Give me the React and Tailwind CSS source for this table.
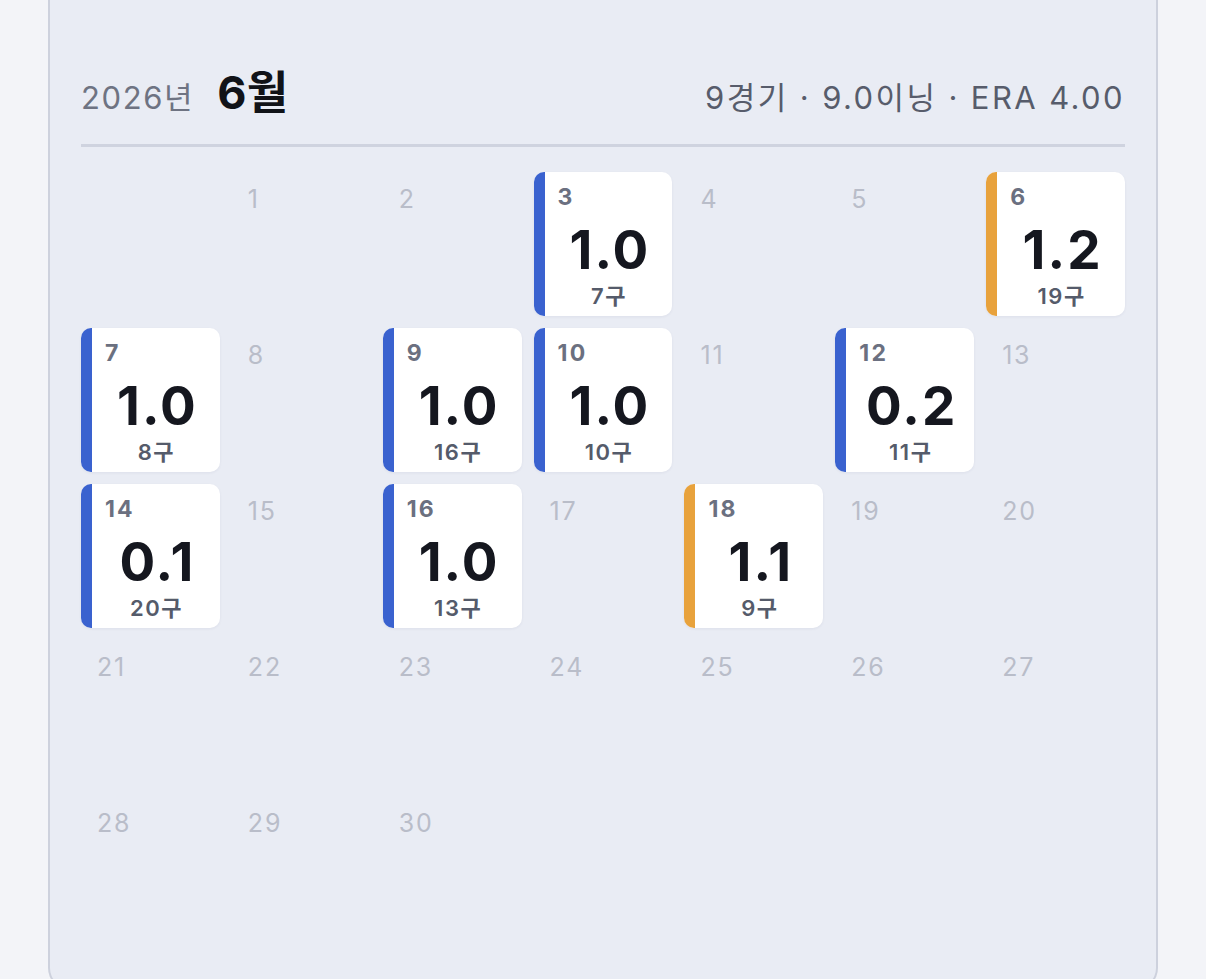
import React from "react";

const font = { fontFamily: '"Inter", "Noto Sans CJK KR", sans-serif' };

const games = {
  3: { ip: "1.0", p: "7구", c: "blue" },
  6: { ip: "1.2", p: "19구", c: "orange" },
  7: { ip: "1.0", p: "8구", c: "blue" },
  9: { ip: "1.0", p: "16구", c: "blue" },
  10: { ip: "1.0", p: "10구", c: "blue" },
  12: { ip: "0.2", p: "11구", c: "blue" },
  14: { ip: "0.1", p: "20구", c: "blue" },
  16: { ip: "1.0", p: "13구", c: "blue" },
  18: { ip: "1.1", p: "9구", c: "orange" },
};

function Cell({ day }) {
  if (day === null) return <div className="h-[144px]" />;
  const g = games[day];
  if (!g) {
    return (
      <div className="h-[144px] pl-[16px] pt-[15px]">
        <div className="text-[25px] leading-none text-[#b9bdc9] tracking-[1.8px]">{day}</div>
      </div>
    );
  }
  return (
    <div className="h-[144px] flex rounded-[10px] overflow-hidden bg-white shadow-[0_1px_3px_rgba(30,40,80,0.06)]">
      <div
        className={
          g.c === "blue"
            ? "w-[11px] shrink-0 bg-[#3a62cf]"
            : "w-[11px] shrink-0 bg-[#e8a23c]"
        }
      />
      <div className="flex-1 flex flex-col pt-[14px]">
        <div className="pl-[13px] text-[23px] leading-none font-bold text-[#6b7080] tracking-[2.2px]">
          {day}
        </div>
        <div className="mt-[15px] pl-[3px] text-center text-[53px] leading-none font-bold text-[#15171f] tracking-[2px]">
          {g.ip}
        </div>
        <div className="mt-[8px] pl-[1px] text-center text-[22px] leading-none font-semibold text-[#555b6a] tracking-[1.5px]">
          {g.p}
        </div>
      </div>
    </div>
  );
}

export default function App() {
  const cells = [null];
  for (let d = 1; d <= 30; d++) cells.push(d);
  while (cells.length < 35) cells.push(null);

  return (
    <div className="h-[979px] bg-[#f3f4f8] overflow-hidden" style={font}>
      <div className="ml-[48px] w-[1110px] h-[990px] bg-[#e9ecf4] border-2 border-t-0 border-[#cdd1dd] rounded-b-[22px] px-[31px] pt-[70px]">
        <div className="flex items-baseline justify-between pb-[29px] border-b-[3px] border-[#cfd3df]">
          <div className="flex items-baseline">
            <span className="text-[31px] leading-none text-[#6e7382] tracking-[1.6px]">2026년</span>
            <span className="ml-[23px] text-[45px] leading-none font-bold text-[#111318] tracking-[0.5px]">6월</span>
          </div>
          <div className="text-[31px] leading-none text-[#575c6b] tracking-[2.4px]">
            9경기 · 9.0이닝 · ERA 4.00
          </div>
        </div>
        <div className="mt-[25px] grid grid-cols-7 gap-[12px]">
          {cells.map((d, i) => (
            <Cell key={i} day={d} />
          ))}
        </div>
      </div>
    </div>
  );
}
